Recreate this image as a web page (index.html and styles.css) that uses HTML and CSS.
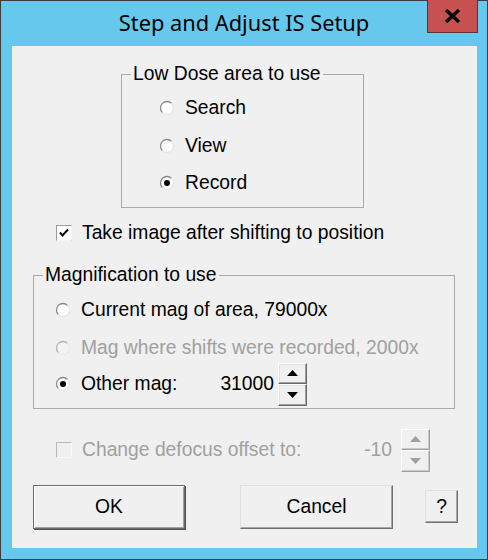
FILE: index.html
```html
<!DOCTYPE html>
<html>
<head>
<meta charset="utf-8">
<link rel="stylesheet" href="styles.css">
</head>
<body>
<div class="window">
  <div class="titlebar">
    <div class="title">Step and Adjust IS Setup</div>
    <div class="close">
      <svg width="17" height="14" viewBox="0 0 17 14"><path d="M2 1 L15 13 M15 1 L2 13" stroke="#000" stroke-width="3.4" fill="none"/></svg>
    </div>
  </div>
  <div class="client">
    <fieldset class="group group1">
      <legend>Low Dose area to use</legend>
      <div class="row r1">
        <span class="radio"><svg width="16" height="16" viewBox="0 0 16 16"><circle cx="8" cy="8" r="6.5" fill="#fff"/><path d="M3.4 12.6 A6.5 6.5 0 0 1 12.6 3.4" stroke="#8a8a8a" stroke-width="1.3" fill="none"/><path d="M12.6 3.4 A6.5 6.5 0 0 1 3.4 12.6" stroke="#e4e4e4" stroke-width="1.3" fill="none"/></svg></span>
        <span class="lbl">Search</span>
      </div>
      <div class="row">
        <span class="radio"><svg width="16" height="16" viewBox="0 0 16 16"><circle cx="8" cy="8" r="6.5" fill="#fff"/><path d="M3.4 12.6 A6.5 6.5 0 0 1 12.6 3.4" stroke="#8a8a8a" stroke-width="1.3" fill="none"/><path d="M12.6 3.4 A6.5 6.5 0 0 1 3.4 12.6" stroke="#e4e4e4" stroke-width="1.3" fill="none"/></svg></span>
        <span class="lbl">View</span>
      </div>
      <div class="row">
        <span class="radio"><svg width="16" height="16" viewBox="0 0 16 16"><circle cx="8" cy="8" r="6.5" fill="#fff"/><path d="M3.4 12.6 A6.5 6.5 0 0 1 12.6 3.4" stroke="#8a8a8a" stroke-width="1.3" fill="none"/><path d="M12.6 3.4 A6.5 6.5 0 0 1 3.4 12.6" stroke="#e4e4e4" stroke-width="1.3" fill="none"/><circle cx="8" cy="8" r="3" fill="#000"/></svg></span>
        <span class="lbl">Record</span>
      </div>
    </fieldset>

    <div class="row check-row">
      <span class="check"><svg width="16" height="16" viewBox="0 0 16 16"><rect x="0.5" y="0.5" width="15" height="15" fill="#fff" stroke="#9a9a9a"/><path d="M0.5 15.5 H15.5 V0.5" stroke="#f4f4f4" fill="none"/><path d="M4 7.5 L6.5 10.5 L12 4.5" stroke="#000" stroke-width="2" fill="none"/></svg></span>
      <span class="lbl">Take image after shifting to position</span>
    </div>

    <fieldset class="group group2">
      <legend>Magnification to use</legend>
      <div class="row r1">
        <span class="radio"><svg width="16" height="16" viewBox="0 0 16 16"><circle cx="8" cy="8" r="6.5" fill="#fff"/><path d="M3.4 12.6 A6.5 6.5 0 0 1 12.6 3.4" stroke="#8a8a8a" stroke-width="1.3" fill="none"/><path d="M12.6 3.4 A6.5 6.5 0 0 1 3.4 12.6" stroke="#e4e4e4" stroke-width="1.3" fill="none"/></svg></span>
        <span class="lbl">Current mag of area, 79000x</span>
      </div>
      <div class="row disabled">
        <span class="radio"><svg width="16" height="16" viewBox="0 0 16 16"><circle cx="8" cy="8" r="6.5" fill="#f4f4f4"/><path d="M3.4 12.6 A6.5 6.5 0 0 1 12.6 3.4" stroke="#b4b4b4" stroke-width="1.3" fill="none"/><path d="M12.6 3.4 A6.5 6.5 0 0 1 3.4 12.6" stroke="#e8e8e8" stroke-width="1.3" fill="none"/></svg></span>
        <span class="lbl">Mag where shifts were recorded, 2000x</span>
      </div>
      <div class="row spin-row">
        <span class="radio"><svg width="16" height="16" viewBox="0 0 16 16"><circle cx="8" cy="8" r="6.5" fill="#fff"/><path d="M3.4 12.6 A6.5 6.5 0 0 1 12.6 3.4" stroke="#8a8a8a" stroke-width="1.3" fill="none"/><path d="M12.6 3.4 A6.5 6.5 0 0 1 3.4 12.6" stroke="#e4e4e4" stroke-width="1.3" fill="none"/><circle cx="8" cy="8" r="3" fill="#000"/></svg></span>
        <span class="lbl other">Other mag:</span>
        <span class="value v1">31000</span>
        <span class="spin">
          <span class="spin-btn"><svg width="11" height="6" viewBox="0 0 11 6"><path d="M0 6 L5.5 0 L11 6 Z" fill="#000"/></svg></span>
          <span class="spin-btn"><svg width="11" height="6" viewBox="0 0 11 6"><path d="M0 0 L5.5 6 L11 0 Z" fill="#000"/></svg></span>
        </span>
      </div>
    </fieldset>

    <div class="row check-row2 disabled">
      <span class="check"><svg width="16" height="16" viewBox="0 0 16 16"><rect x="0.5" y="0.5" width="15" height="15" fill="#f0f0f0" stroke="#b8b8b8"/><path d="M0.5 15.5 H15.5 V0.5" stroke="#fafafa" fill="none"/></svg></span>
      <span class="lbl defocus">Change defocus offset to:</span>
      <span class="value v2">-10</span>
      <span class="spin">
        <span class="spin-btn"><svg width="11" height="6" viewBox="0 0 11 6"><path d="M0 6 L5.5 0 L11 6 Z" fill="#a0a0a0"/></svg></span>
        <span class="spin-btn"><svg width="11" height="6" viewBox="0 0 11 6"><path d="M0 0 L5.5 6 L11 0 Z" fill="#a0a0a0"/></svg></span>
      </span>
    </div>

    <div class="buttons">
      <button class="btn ok">OK</button>
      <button class="btn cancel">Cancel</button>
      <button class="btn help">?</button>
    </div>
  </div>
</div>
</body>
</html>
```

FILE: styles.css
```css
html, body {
  margin: 0;
  padding: 0;
}
body {
  width: 488px;
  height: 560px;
  overflow: hidden;
}
.window {
  box-sizing: border-box;
  width: 488px;
  height: 560px;
  background: #65c8ec;
  border: 1px solid #3c3c3c;
  display: flex;
  flex-direction: column;
}
.titlebar {
  position: relative;
  height: 45px;
  flex: none;
}
.title {
  font-family: "Noto Sans", "Open Sans", sans-serif;
  font-size: 21.8px;
  line-height: 28px;
  color: #000;
  text-align: center;
  padding-top: 8px;
  padding-left: 0;
}
.close {
  position: absolute;
  top: -1px;
  left: 426px;
  width: 51px;
  height: 33px;
  box-sizing: border-box;
  background: #c75050;
  border: 1px solid #5a3434;
  border-top: none;
  display: flex;
  align-items: center;
  justify-content: center;
  padding-bottom: 1px;
}
.client {
  margin: 0 10px 0 11px;
  height: 502px;
  background: #f0f0f0;
  font-family: "Liberation Sans", Arial, sans-serif;
  font-size: 19.3px;
  color: #000;
  display: flex;
  flex-direction: column;
  align-items: flex-start;
}
.group {
  margin: 0;
  border: 1px solid #a9a9a9;
  box-sizing: border-box;
}
.group legend {
  line-height: 20px;
  padding: 0 2px;
}
.group1 {
  margin-top: 18px;
  margin-left: 109px;
  width: 243px;
  padding: 13px 0 13px 37px;
}
.group1 legend {
  margin-left: -28px;
}
.group2 {
  margin-top: 21px;
  margin-left: 21px;
  width: 422px;
  padding: 14px 0 2px 21px;
}
.group2 legend {
  margin-left: -12px;
}
.row {
  display: flex;
  align-items: center;
  height: 22px;
  line-height: 22px;
  white-space: nowrap;
}
.group .row {
  margin-top: 15.5px;
}
.group .row.r1 {
  margin-top: 0;
}
.radio, .check {
  display: flex;
  width: 16px;
  height: 16px;
  flex: none;
}
.lbl {
  margin-left: 10px;
}
.disabled {
  color: #a0a0a0;
}
.check-row {
  margin-top: 14px;
  margin-left: 44px;
}
.group .spin-row {
  height: 43px;
  margin-top: 4px;
}
.other {
  width: 120px;
}
.value {
  text-align: right;
}
.v1 {
  width: 73px;
}
.spin {
  display: flex;
  flex-direction: column;
  width: 29px;
  height: 43px;
  margin-left: 4px;
  flex: none;
}
.spin-btn {
  flex: 1;
  box-sizing: border-box;
  background: #f0f0f0;
  border: 1px solid;
  border-color: #ffffff #696969 #696969 #ffffff;
  box-shadow: inset -1px -1px 0 #a0a0a0, inset 1px 1px 0 #e3e3e3;
  display: flex;
  align-items: center;
  justify-content: center;
}
.check-row2 {
  margin-top: 20px;
  margin-left: 44px;
  height: 43px;
}
.defocus {
  width: 240px;
}
.v2 {
  width: 70px;
}
.check-row2 .spin {
  margin-left: 9px;
}
.check-row2 .spin-btn {
  border-color: #ffffff #a0a0a0 #a0a0a0 #ffffff;
  box-shadow: inset -1px -1px 0 #c8c8c8;
}
.buttons {
  margin-top: 13px;
  margin-left: 21px;
  display: flex;
  align-items: center;
}
.btn {
  font-family: "Liberation Sans", Arial, sans-serif;
  font-size: 19.3px;
  color: #000;
  background: #f0f0f0;
  box-sizing: border-box;
  padding: 0;
  margin: 0;
}
.ok {
  width: 152px;
  height: 44px;
  border: 1px solid #6a6a6a;
  box-shadow: inset 1px 1px 0 #fff, inset -1px -1px 0 #a0a0a0, 1px 1px 0 #505050;
}
.cancel {
  width: 153px;
  height: 44px;
  margin-left: 55px;
  border: 1px solid;
  border-color: #e0e0e0 #707070 #707070 #e0e0e0;
  box-shadow: inset -1px -1px 0 #a8a8a8;
}
.help {
  width: 33px;
  height: 33px;
  margin-left: 32px;
  border: 1px solid;
  border-color: #e0e0e0 #707070 #707070 #e0e0e0;
  box-shadow: inset -1px -1px 0 #a8a8a8;
}
```
